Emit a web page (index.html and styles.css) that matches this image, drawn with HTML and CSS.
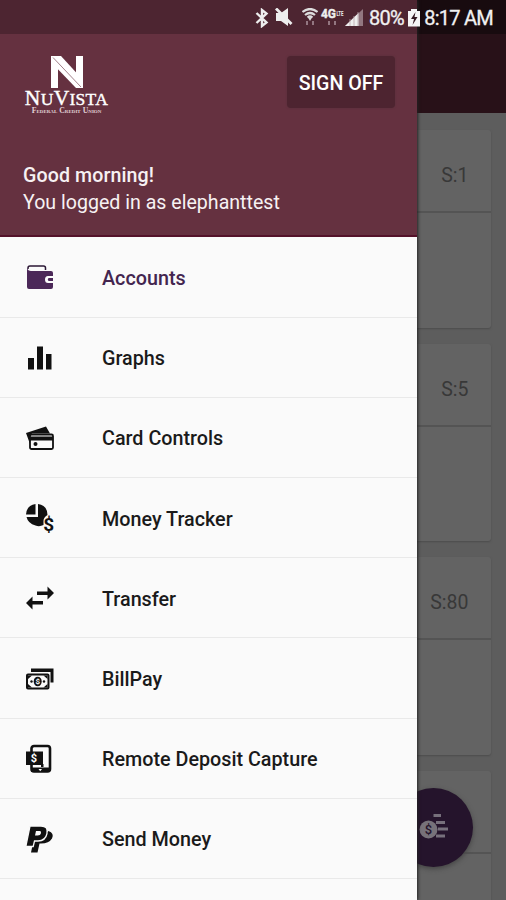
FILE: index.html
```html
<!DOCTYPE html>
<html lang="en">
<head>
<meta charset="utf-8">
<title>NuVista Mobile</title>
<link rel="stylesheet" href="styles.css">
</head>
<body>
<div class="screen">
  <div class="page">
    <div class="appbar"></div>
    <main class="cards">
      <section class="card"><div class="card-head">S:1</div></section>
      <section class="card"><div class="card-head">S:5</div></section>
      <section class="card"><div class="card-head">S:80</div></section>
      <section class="card"><div class="card-head"></div></section>
    </main>
  </div>
  <div class="fab">
    <svg width="32" height="32" viewBox="0 0 32 32">
      <path d="M14.500 3.500H22M17 10.500H26M19 17H29M17 24H26" stroke="#77707c" stroke-width="3"/>
      <circle cx="9.500" cy="17.500" r="9" fill="#77727a"/>
      <text x="9.500" y="22" text-anchor="middle" class="fab-dollar">$</text>
    </svg>
  </div>
  <aside class="drawer">
    <header class="head">
      <div class="head-top">
        <div class="logo">
          <svg width="34" height="33" viewBox="0 0 34 33" fill="#fff">
            <path d="M1 4L8 10V32H1ZM26 0H33V28L26 22Z"/>
            <path d="M1 0H11L33 24V32H26L1 6Z"/>
            <path d="M3 1.500L31 31" stroke="#8a606c" stroke-width=".8"/>
          </svg>
          <div class="brand">N<small>U</small>V<small>ISTA</small></div>
          <div class="tag">Federal Credit Union</div>
        </div>
        <button class="signoff">SIGN OFF</button>
      </div>
      <div class="greet"><b>Good morning!</b><br>You logged in as elephanttest</div>
    </header>
    <nav class="menu">
      <a class="item active">
        <svg class="icon" viewBox="0 0 30 30"><path d="M3 6V5Q3 3 5 3H18.500Q20.500 3 20.500 5V7" fill="none" stroke="#2b1735" stroke-width="1.500"/><path d="M2 5Q3 8 6 8H26Q28 8 28 10V13H23Q20 13 20 16.500T23 20H28V24Q28 26 26 26H4Q2 26 2 24Z" fill="#4b2858"/><path d="M23.500 15H28V18H23.500Q22 16.500 23.500 15Z" fill="#4b2858"/></svg>
        <span>Accounts</span></a>
      <a class="item">
        <svg class="icon" viewBox="0 0 30 30"><path d="M3 14H9V25.500H3ZM12 2.500H18V25.500H12ZM21 10H26.500V25.500H21Z"/></svg>
        <span>Graphs</span></a>
      <a class="item">
        <svg class="icon" viewBox="0 0 30 30"><path d="M1 9L21 2.500L25 9.500H7L5 12V20Z"/><rect x="5" y="10.500" width="23" height="14.500" rx="1.500" fill="#fafafa" stroke="#111" stroke-width="1.800"/><path d="M5 12.500H28V16.500H5Z"/><circle cx="10.500" cy="20" r="2"/></svg>
        <span>Card Controls</span></a>
      <a class="item">
        <svg class="icon" viewBox="0 0 30 30"><path d="M10.500 0V10.500H1Q1.500 1.500 10.500 0Z"/><path d="M13 0Q22.500 1.500 22.500 11Q18.500 13.500 18.500 17T18.500 21Q14.500 23 10.500 21.500Q3 19.500 1.500 13H13Z"/><text x="23.800" y="26.500" text-anchor="middle" class="dollar">$</text></svg>
        <span>Money Tracker</span></a>
      <a class="item">
        <svg class="icon" viewBox="0 0 30 30"><path d="M12 7.500H22.500V2.500L29 9L22.500 15.500V11H12ZM18 17H7.500V12.500L1 19L7.500 25.500V20.500H18Z"/></svg>
        <span>Transfer</span></a>
      <a class="item">
        <svg class="icon" viewBox="0 0 30 30"><path d="M6 3.500H28.500V17.500H25.500V7H6Z"/><rect x="2" y="9.500" width="21.500" height="14" rx="1" fill="#fafafa" stroke="#111" stroke-width="2"/><path d="M3 10.500H7L3 14ZM22.500 10.500H18.500L22.500 14ZM3 22.500H7L3 19ZM22.500 22.500H18.500L22.500 19Z"/><ellipse cx="12.700" cy="16.500" rx="4" ry="4.800"/><text x="12.700" y="19.400" text-anchor="middle" class="bill-dollar">$</text><circle cx="6.500" cy="16.500" r="1.200"/><circle cx="19" cy="16.500" r="1.200"/></svg>
        <span>BillPay</span></a>
      <a class="item">
        <svg class="icon" viewBox="0 0 30 30"><rect x="6.500" y="1" width="18.500" height="25.500" rx="2.500" fill="#fafafa" stroke="#111" stroke-width="2.600"/><path d="M6 22.500H25V27H6Z"/><rect x="1" y="6.500" width="17" height="13.500"/><path d="M16 19H18.500V22H16Z"/><text x="9" y="17.200" text-anchor="middle" class="deposit-dollar">$</text><path d="M13.500 24H17L15.250 26.200Z" fill="#fff"/></svg>
        <span>Remote Deposit Capture</span></a>
      <a class="item">
        <svg class="icon" viewBox="0 0 30 30"><path d="M23.500 6Q29.500 8 27 13.500Q24 18.500 16 18.500H14.500L12.500 27.500H6L8 18Z"/><path d="M5 1H16Q23.500 1 22 8.500Q20.500 16 13 16H9.500L8.200 21.500H.8Z" stroke="#fafafa" stroke-width="1.300"/><path d="M11 6L10 10.500H12.500Q15.500 10.500 16 8T14 6Z" fill="#fafafa"/></svg>
        <span>Send Money</span></a>
    </nav>
  </aside>
  <div class="status">
    <svg width="14" height="20" viewBox="0 0 14 20" class="bt"><path d="M1.500 5L11.500 14.500L7 18V2L11.500 5.500L1.500 15" fill="none" stroke="#eee" stroke-width="2.400"/></svg>
    <svg width="18" height="20" viewBox="0 0 18 20" class="mute"><path d="M1 5H6L13 0V18L6 13H1Z" fill="#eee"/><path d="M1 .5L16.500 16" stroke="#eee" stroke-width="2.800"/></svg>
    <svg width="16" height="20" viewBox="0 0 16 20" class="wifi" fill="none" stroke="#ddd"><path d="M.5 4Q8-2 15.500 4M3 7Q8 3 13 7M5.500 9.500Q8 7.500 10.500 9.500" stroke-width="2.200"/><path d="M8 13L6 9.500H10Z" fill="#ddd" stroke="none"/><path d="M5 13V17M11 13V17" stroke="#937781" stroke-width="2"/></svg>
    <svg width="24" height="20" viewBox="0 0 24 20" class="lte"><text x="0" y="10" class="lte-gen" textLength="15" lengthAdjust="spacingAndGlyphs">4G</text><text x="15.500" y="8" class="lte-name" textLength="7" lengthAdjust="spacingAndGlyphs">LTE</text><path d="M8 13V17M14 13V17" stroke="#937781" stroke-width="2"/></svg>
    <svg width="18" height="18" viewBox="0 0 18 18" class="signal"><path d="M0 17L18 0V17Z" fill="#927780"/><path d="M0 17L13.500 4V17Z" fill="#eee"/><path d="M5 10V17M9 7V17M13 3V17" stroke="#b7a5aa" stroke-width=".8"/></svg>
    <span class="pct">80%</span>
    <svg width="12" height="18" viewBox="0 0 12 18" class="batt"><path d="M3 2V0H9V2H12V17.500H0V2Z" fill="#f5f5f5"/><path d="M7.500 3L3 10H6L4.500 16L9.500 8H6.500Z" fill="#321820"/></svg>
    <span class="time">8:17 AM</span>
  </div>
</div>
</body>
</html>
```

FILE: styles.css
```css
* { box-sizing: border-box; }
body { margin: 0; font-family: Roboto, "Liberation Sans", sans-serif; }
.screen { position: relative; width: 506px; height: 900px; overflow: hidden; background: #5d5d5d; }
.appbar { height: 113px; background: linear-gradient(#180b0f 0 34px, #281118 34px); }
.cards { display: flex; flex-direction: column; gap: 16px; padding: 17px 15px 0; }
.card { height: 197.500px; flex: none; background: #636363; border-radius: 3px; box-shadow: 0 1px 2px #4c4c4c; }
.card-head { display: flex; align-items: center; justify-content: flex-end; height: 83px; padding: 10px 22.500px 0 0; border-bottom: 2px solid #545454; color: #383838; font-size: 19.500px; }
.fab { position: absolute; left: 394px; top: 788px; width: 79px; height: 79px; border-radius: 50%; background: #25142c; box-shadow: 0 2px 5px #444; display: flex; align-items: center; padding-left: 25px; }
.fab-dollar { font: 500 13px Roboto, sans-serif; fill: #25142c; }
.drawer { position: absolute; left: 0; top: 0; width: 417px; height: 900px; background: #fafafa; box-shadow: 1px 0 3px #222; overflow: hidden; }
.head { height: 237px; padding: 34px 22px 0 23px; background: linear-gradient(#4d2531 0 34px, #653140 34px); border-bottom: 2px solid #54122a; color: #f7f1f3; }
.head-top { display: flex; justify-content: space-between; padding-top: 22px; height: 128px; }
.logo { width: 87px; display: flex; flex-direction: column; align-items: center; color: #fff; white-space: nowrap; }
.logo svg { flex: none; }
.brand { height: 18px; font: 21.500px/18px "Liberation Serif", serif; letter-spacing: .3px; -webkit-text-stroke: .4px #fff; }
.brand small { font-size: 17.500px; }
.tag { margin-top: 1px; font: bold 7.800px/6px "Liberation Serif", serif; font-variant: small-caps; color: #e1d2d7; }
.signoff { width: 108px; height: 52px; padding: 2px 0 0; border: 0; border-radius: 4px; background: #4d2430; color: #fff; font: 500 19.600px Roboto, sans-serif; box-shadow: 0 0 2px #53303a; }
.greet { font-size: 19.600px; line-height: 27px; }
.greet b { font-weight: 500; letter-spacing: .1px; }
.item { display: flex; align-items: center; height: 80.200px; padding: 3px 0 0 25px; border-bottom: 1px solid #e9e9e9; color: #1a1a1a; font-size: 19.750px; font-weight: 500; }
.item:first-child { height: 80.700px; }
.item.active { color: #43254f; }
.icon { width: 30px; height: 30px; margin-right: 47px; fill: #111; overflow: visible; }
.dollar { font: bold 19px Roboto, sans-serif; }
.bill-dollar { font: bold 8px Roboto, sans-serif; fill: #fff; }
.deposit-dollar { font: bold 11px Roboto, sans-serif; fill: #fff; }
.status { position: absolute; left: 0; top: 0; width: 506px; height: 34px; padding: 2px 13px 0 255px; display: flex; align-items: center; color: #f1f1f1; font-size: 20px; letter-spacing: -.75px; white-space: nowrap; }
.status svg { flex: none; letter-spacing: 0; }
.mute { margin-left: 6px; }
.wifi { margin-left: 9px; }
.lte { margin-left: 3px; overflow: visible; }
.lte-gen { font: bold 12px Roboto, sans-serif; fill: #eee; stroke: #eee; stroke-width: .4px; }
.lte-name { font: bold 7px Roboto, sans-serif; fill: #eee; }
.pct { margin-left: 6px; -webkit-text-stroke: .3px #f1f1f1; }
.batt { margin-left: 4px; }
.time { margin-left: auto; -webkit-text-stroke: .3px #f1f1f1; }
```
